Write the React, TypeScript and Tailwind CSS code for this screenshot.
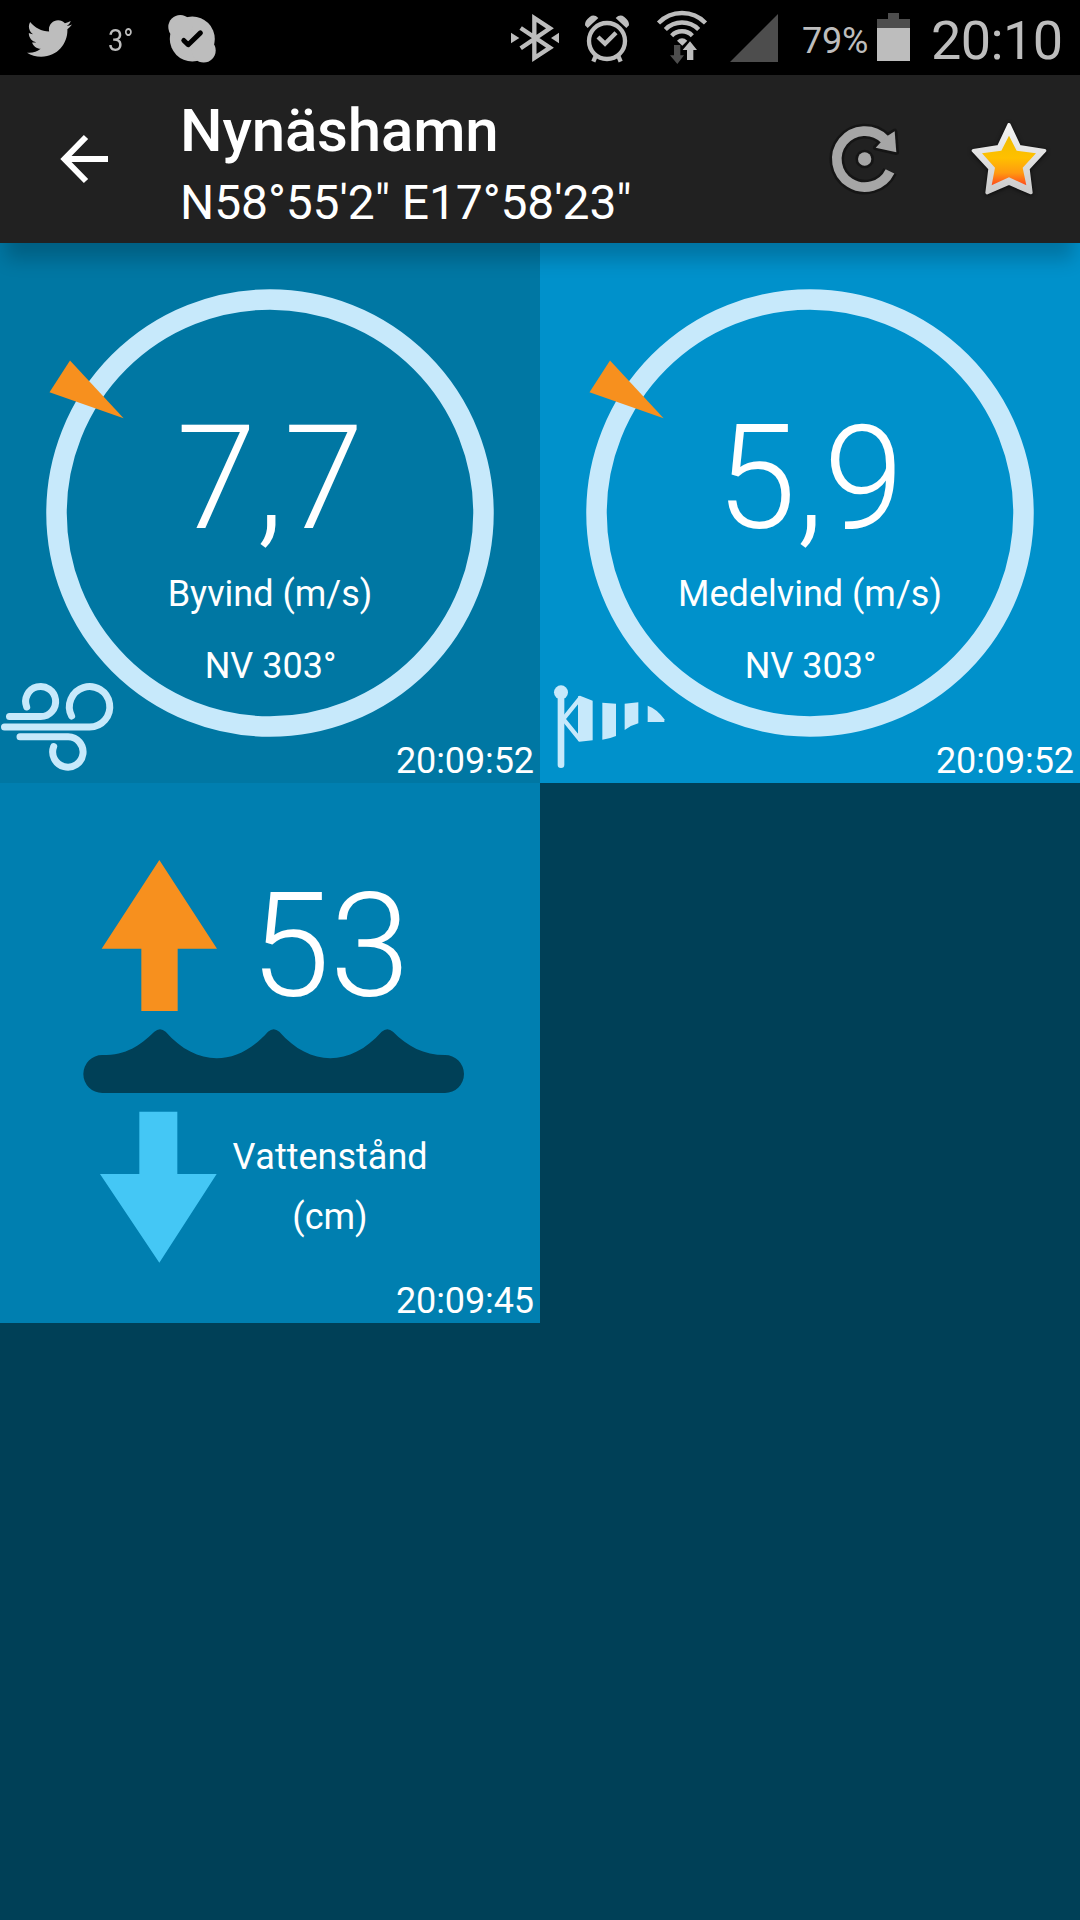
import type { ReactNode } from "react";
import { FaTwitter } from "react-icons/fa";

interface Reading {
  value: string;
  label: string;
  direction: string;
  time: string;
}

const gust: Reading = {
  value: "7,7",
  label: "Byvind (m/s)",
  direction: "NV 303°",
  time: "20:09:52",
};

const meanWind: Reading = {
  value: "5,9",
  label: "Medelvind (m/s)",
  direction: "NV 303°",
  time: "20:09:52",
};

function StatusBar() {
  return (
    <div className="flex h-[75px] bg-black text-[#bdbdbd]">
      <FaTwitter className="mt-[16px] ml-[27px] size-[45px]" />
      <span className="mt-[21px] ml-[36px] w-[26px] origin-left scale-x-[0.88] text-[31px] leading-[40px]">3°</span>
      <svg className="mt-[13px] ml-[32px] h-[52px] w-[52px]" viewBox="166 13 52 52">
        <g fill="#bdbdbd">
          <circle cx="192.3" cy="39" r="22.5" />
          <circle cx="180.3" cy="27" r="12" />
          <circle cx="203.7" cy="50.6" r="12" />
        </g>
        <path d="M183.8 40.5l4.4 4.2 12.2-11.8" fill="none" stroke="#000" strokeWidth="5" strokeLinecap="round" strokeLinejoin="round" />
      </svg>

      {/* Bluetooth */}
      <svg className="mt-[12px] ml-[292px] h-[52px] w-[50px]" viewBox="60 36 150 156">
        <path d="M92 84L180 143L133 174V54L180 85L92 145" fill="none" stroke="#bdbdbd" strokeWidth="13" />
        <path d="M63 98L88 114L63 130ZM207 98L183 114L207 130Z" fill="#bdbdbd" />
      </svg>

      {/* Alarm */}
      <svg className="mt-[13px] ml-[24px] h-[52px] w-[46px]" viewBox="282 39 138 156">
        <g fill="none" stroke="#bdbdbd" strokeWidth="13">
          <circle cx="351" cy="123" r="54" />
          <path d="M324 111L345 131L378 98M317 168L310 185M385 168L392 185" />
        </g>
        <path d="M293 84L285 76Q284 62 299 51Q312 41 325 54ZM409 84L417 76Q418 62 403 51Q390 41 377 54Z" fill="#bdbdbd" />
      </svg>

      {/* Wifi */}
      <svg className="mt-[9px] ml-[26px] h-[57px] w-[52px]" viewBox="498 27 156 171">
        <g fill="none" stroke="#bdbdbd" strokeWidth="13">
          <path d="M505.500 69A98 98 0 0 1 646.500 69" />
          <path d="M526 88.400A70 70 0 0 1 626 88.400" />
          <path d="M545 107A43 43 0 0 1 607 107" />
        </g>
        <path d="M561 122Q576 108 592 122L577 137Z" fill="#bdbdbd" />
        <path d="M552 135H571V166H582L562 192L540 166H552Z" fill="#4d4d4d" />
        <path d="M600 124L621 150H610V180H591V150H578Z" fill="#bdbdbd" stroke="#000" strokeWidth="5" paintOrder="stroke" />
      </svg>

      <svg className="mt-[14px] ml-[22px] h-[48px] w-[48px]" viewBox="0 0 48 48">
        <path d="M48 0V48H0Z" fill="#4d4d4d" />
      </svg>

      <span className="mt-[20px] ml-[24px] w-[75px] text-[36px] leading-[42px] tracking-[-0.2px]">79%</span>
      <svg className="mt-[13px] h-[48px] w-[33px]" viewBox="0 0 33 48">
        <path d="M11 0H22V6H33V15H0V6H11Z" fill="#4d4d4d" />
        <path d="M0 15H33V48H0Z" fill="#bdbdbd" />
      </svg>
      <span className="mt-[9px] ml-[21px] text-[54px] leading-[64px] tracking-[-0.6px]">20:10</span>
    </div>
  );
}

function RefreshIcon() {
  const arc = "M270 245A84 84 0 1 1 254 149";
  const head = "M284 125L289 188L227 174L243 157L262 139Z";
  return (
    <svg className="h-[76px] w-[72px]" viewBox="84 94 216 228">
      <g stroke="#151515" fill="none" strokeLinejoin="round">
        <path d={arc} strokeWidth="44" />
        <path d={head} strokeWidth="16" />
        <circle cx="194" cy="208" r="24" strokeWidth="8" />
      </g>
      <path d={arc} fill="none" stroke="#a6a6a6" strokeWidth="29" />
      <path d={head} fill="#a6a6a6" />
      <circle cx="194" cy="208" r="20" fill="#a6a6a6" />
    </svg>
  );
}

function StarIcon() {
  return (
    <svg className="h-[78px] w-[80px] drop-shadow-[0_1px_2px_rgba(0,0,0,0.7)]" viewBox="507 90 240 234">
      <defs>
        <linearGradient id="gold" x1="0" y1="0" x2="0" y2="1">
          <stop offset="0" stopColor="#f0bc00" />
          <stop offset="0.45" stopColor="#ffc000" />
          <stop offset="0.75" stopColor="#ff9a10" />
          <stop offset="1" stopColor="#ff4a1c" />
        </linearGradient>
        <linearGradient id="silver" x1="0" y1="0" x2="0" y2="1">
          <stop offset="0" stopColor="#f4f4f4" />
          <stop offset="1" stopColor="#cbcbcb" />
        </linearGradient>
      </defs>
      <path
        d="M627 104L658 170L734 182L684 236L693 308L627 280L561 308L570 236L520 182L596 170Z"
        fill="url(#silver)"
        stroke="url(#silver)"
        strokeWidth="10"
        strokeLinejoin="round"
      />
      <path d="M627 137L650 182L708 190L668 233L679 286L627 262L575 286L585 233L546 190L604 182Z" fill="url(#gold)" />
    </svg>
  );
}

function AppBar() {
  return (
    <header className="relative z-10 flex h-[168px] bg-[#212121] text-white shadow-[0_22px_18px_-6px_rgba(0,0,0,0.2)]">
      <svg className="mt-[57px] ml-[57px] h-[54px] w-[54px]" viewBox="57 132 54 54">
        <path d="M86 137L64.500 159L86 181M64.500 159H108" fill="none" stroke="#fff" strokeWidth="6" />
      </svg>
      <div className="mt-[26px] ml-[69px] w-[640px]">
        <h1 className="text-[60px] leading-[60px] font-medium tracking-[-0.15px]">Nynäshamn</h1>
        <p className="mt-[14px] text-[48px] leading-[56px] tracking-[-0.1px]">N58°55'2" E17°58'23"</p>
      </div>
      <div className="mt-[46px] ml-[8px]">
        <RefreshIcon />
      </div>
      <div className="mt-[45px] ml-[69px]">
        <StarIcon />
      </div>
    </header>
  );
}

function WindTile({ reading, className, children }: { reading: Reading; className: string; children: ReactNode }) {
  return (
    <section className={`relative flex h-[540px] flex-col items-center pt-[164px] pb-px ${className}`}>
      <svg className="absolute inset-0 size-full" viewBox="0 0 540 540">
        <circle cx="270" cy="270" r="213.500" fill="none" stroke="#c7e9fb" strokeWidth="20.500" />
        <path d="M70 117.500L49.500 149.300L123.600 175.300Z" fill="#f7901e" />
        {children}
      </svg>
      <p className="relative text-[144px] leading-[144px] font-light">{reading.value}</p>
      <p className="relative mt-[13px] text-[36px] leading-[60px]">{reading.label}</p>
      <p className="relative mt-[12px] ml-px text-[36px] leading-[60px]">{reading.direction}</p>
      <time className="relative mt-auto mr-[6px] self-end text-[36px] leading-[42px] tracking-[-0.1px]">{reading.time}</time>
    </section>
  );
}

function GustIcon() {
  return (
    <g transform="translate(0 -243)" fill="none" stroke="#c7e9fb" strokeWidth="7" strokeLinecap="round">
      <path d="M9.500 716.500H40.600A15 15 0 1 0 26.700 707" />
      <path d="M4.500 727H89.500A20.200 20.200 0 1 0 71.600 716" />
      <path d="M20 736.800H68.200A15.200 15.200 0 1 1 53.700 746.500" />
    </g>
  );
}

function WindsockIcon() {
  return (
    <g transform="translate(0 417) scale(0.33333)" fill="#c7e9fb">
      <circle cx="63" cy="97" r="21" />
      <path d="M63 97V314" stroke="#c7e9fb" strokeWidth="20" strokeLinecap="round" />
      <path d="M120 115L70 177L120 239" fill="none" stroke="#c7e9fb" strokeWidth="13" />
      <path d="M114 109L120 107L158 122V241L118 245L114 243Z" />
      <path d="M187 128L228 131V228Q210 236 187 239Z" />
      <path d="M254 131L295 127V190Q275 195 254 210Z" />
      <path d="M323 137Q350 146 373 178V186H323Z" />
    </g>
  );
}

function WaterTile() {
  return (
    <section className="relative flex h-[540px] flex-col bg-[#007fb0] pt-[92px] pb-px">
      <svg className="absolute inset-0 size-full" viewBox="0 0 540 540">
        <g transform="translate(60 57) scale(0.33333)">
          <path d="M298 60L471 326H353V513H244V326H125Z" fill="#f7901e" />
          <path
            d="M127 645C200 645 240 617 283 575Q300 560 317 575C410 681 530 681 624 575Q641 560 658 575C751 681 871 681 965 575Q982 560 999 575C1042 619 1092 645 1155 645A57 57 0 0 1 1155 759H127A57 57 0 0 1 127 645Z"
            fill="#004057"
          />
          <path d="M238 815H352V1002H470L298 1268L120 1002H238Z" fill="#44c7f5" />
        </g>
      </svg>
      <div className="relative flex flex-col items-center pl-[120px]">
        <p className="text-[144px] leading-[144px] font-light">53</p>
        <p className="mt-[108px] text-center text-[36px] leading-[60px] [font-kerning:none]">
          Vattenstånd
          <br />
          (cm)
        </p>
      </div>
      <time className="relative mt-auto mr-[6px] self-end text-[36px] leading-[42px] tracking-[-0.1px]">20:09:45</time>
    </section>
  );
}

export default function App() {
  return (
    <div className="h-[1920px] w-[1080px] overflow-hidden bg-[#004057] font-[Roboto,sans-serif] text-white">
      <StatusBar />
      <AppBar />
      <main className="grid grid-cols-2">
        <WindTile reading={gust} className="bg-[#0077a3]">
          <GustIcon />
        </WindTile>
        <WindTile reading={meanWind} className="bg-[#0091cb]">
          <WindsockIcon />
        </WindTile>
        <WaterTile />
      </main>
    </div>
  );
}
